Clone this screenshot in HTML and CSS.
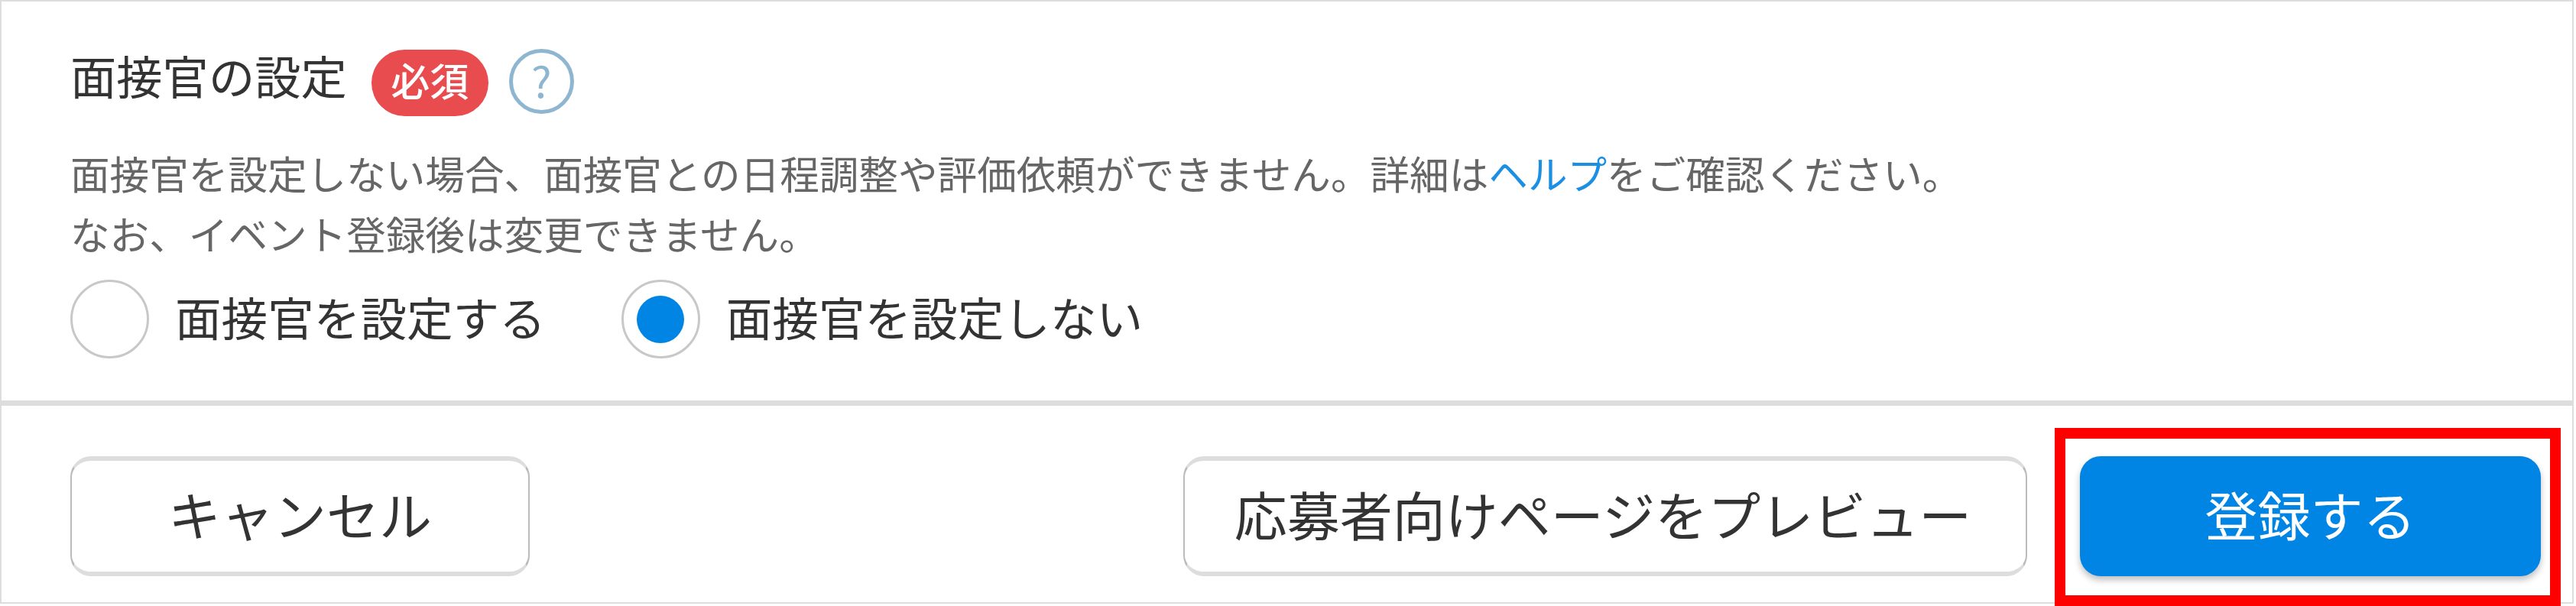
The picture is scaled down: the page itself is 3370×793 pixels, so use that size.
FILE: index.html
```html
<!DOCTYPE html>
<html lang="ja">
  <head>
    <meta charset="utf-8" />
    <title>面接官の設定</title>
    <link rel="stylesheet" href="styles.css" />
  </head>
  <body>
    <div class="panel">
      <div class="settings">
        <div class="title-row">
          <h2 class="title">面接官の設定</h2>
          <span class="badge">必須</span>
          <span class="help-icon">?</span>
        </div>
        <p class="note">
          面接官を設定しない場合、面接官との日程調整や評価依頼ができません。詳細は<a class="link" href="#">ヘルプ</a>をご確認ください。<br />
          なお、イベント登録後は変更できません。
        </p>
        <div class="radios">
          <label class="radio">
            <span class="radio-mark"></span>
            <span class="radio-text">面接官を設定する</span>
          </label>
          <label class="radio">
            <span class="radio-mark checked"></span>
            <span class="radio-text">面接官を設定しない</span>
          </label>
        </div>
      </div>
      <div class="footer">
        <button class="btn cancel">キャンセル</button>
        <div class="footer-right">
          <button class="btn preview">応募者向けページをプレビュー</button>
          <button class="btn submit">登録する</button>
        </div>
      </div>
    </div>
    <div class="highlight"></div>
  </body>
</html>
```

FILE: styles.css
```css
html,
body {
  margin: 0;
  height: 793px;
  overflow: hidden;
  background: #fff;
}
body {
  position: relative;
  font-family: "Noto Sans CJK JP", "Noto Sans", sans-serif;
  color: #333;
}
.panel {
  box-sizing: border-box;
  width: 3367px;
  height: 790px;
  border: 2px solid #ddd;
}
.settings {
  box-sizing: border-box;
  height: 522px;
  padding: 61px 0 0 90px;
}
.title-row {
  display: flex;
  align-items: center;
  height: 90px;
}
.title {
  margin: 0 0 20px;
  font-size: 60.3px;
  font-weight: 400;
  line-height: 70px;
  color: #333;
}
.badge {
  margin-left: 32px;
  width: 153px;
  height: 87px;
  border-radius: 44px;
  background: #e84c4f;
  color: #fff;
  font-size: 51px;
  font-weight: 500;
  line-height: 79px;
  text-align: center;
}
.help-icon {
  box-sizing: border-box;
  margin: 0 0 4px 27px;
  width: 85px;
  height: 85px;
  border: 5px solid #8fb6d0;
  border-radius: 50%;
  color: #8fb6d0;
  font-size: 56px;
  line-height: 70px;
  text-align: center;
}
.note {
  margin: 33px 0 0;
  font-size: 51.6px;
  line-height: 79px;
  color: #666;
}
.link {
  color: #1a8fe3;
  text-decoration: none;
}
.radios {
  display: flex;
  gap: 99px;
  margin-top: 22px;
}
.radio {
  display: flex;
  align-items: center;
  gap: 34px;
  font-size: 60.6px;
  line-height: 90px;
}
.radio-text {
  margin-bottom: 8px;
}
.radio-mark {
  box-sizing: border-box;
  display: flex;
  align-items: center;
  justify-content: center;
  width: 103px;
  height: 103px;
  border: 3px solid #c8c8c8;
  border-radius: 50%;
}
.radio-mark.checked::after {
  content: "";
  width: 62px;
  height: 62px;
  border-radius: 50%;
  background: #0085e5;
}
.footer {
  box-sizing: border-box;
  display: flex;
  justify-content: space-between;
  height: 264px;
  padding: 66px 41px 0 90px;
  border-top: 7px solid #ddd;
}
.footer-right {
  display: flex;
  gap: 69px;
}
.btn {
  box-sizing: border-box;
  height: 157px;
  border: solid #ddd;
  border-width: 6px 2px;
  border-left-color: #bbb;
  border-right-color: #bbb;
  border-radius: 27px;
  background: #fff;
  color: #333;
  font-family: inherit;
  font-size: 69px;
  padding: 0 0 8px;
}
.cancel {
  width: 601px;
}
.preview {
  width: 1104px;
  padding-right: 6px;
}
.submit {
  width: 603px;
  border: none;
  background: #0085e5;
  color: #fff;
  box-shadow: 0 5px 9px rgba(0, 0, 0, 0.25);
}
.highlight {
  box-sizing: border-box;
  position: absolute;
  left: 2688px;
  top: 560px;
  width: 662px;
  height: 233px;
  border: 14px solid #f00;
}
.highlight::before {
  content: "";
  position: absolute;
  z-index: -1;
  left: -16px;
  top: -4px;
  right: 3px;
  bottom: -10px;
  border: 1px solid #ddd;
}
```
